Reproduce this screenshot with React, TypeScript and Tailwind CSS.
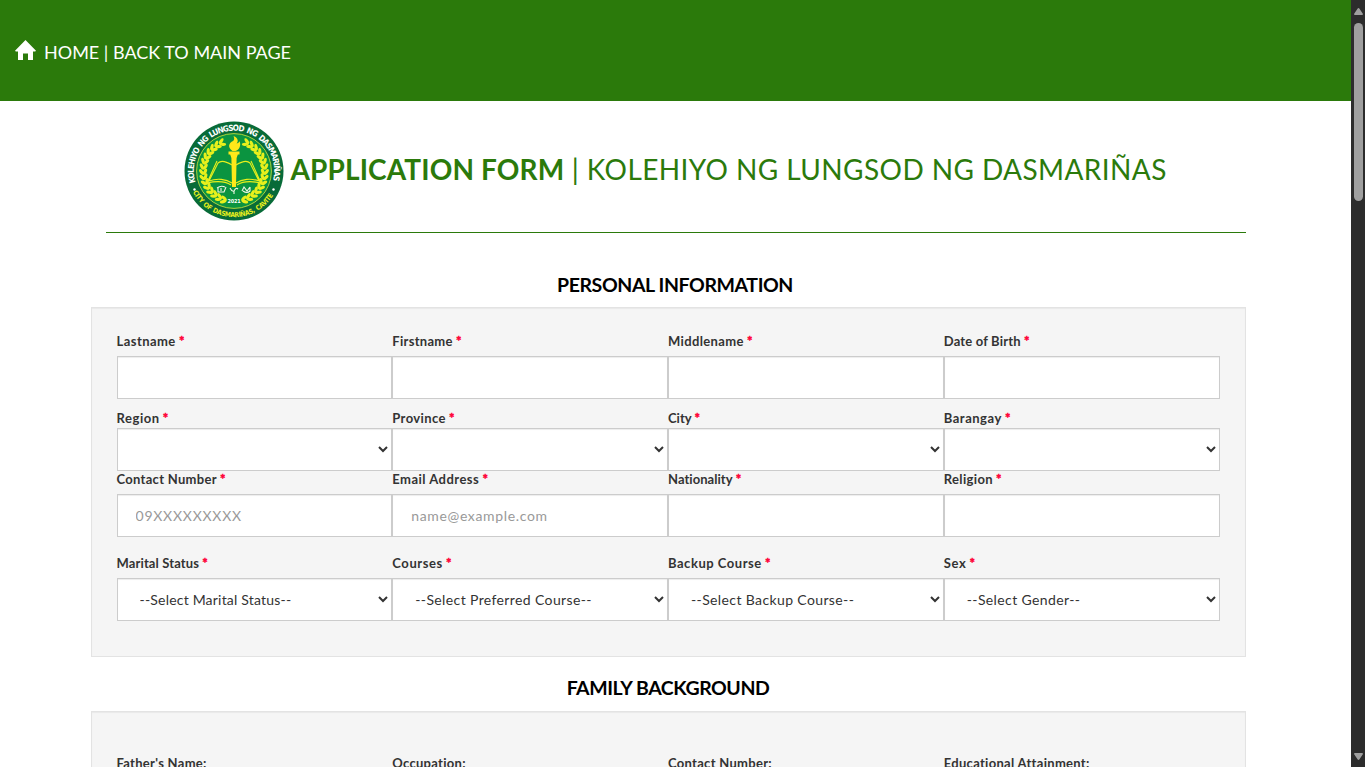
import React from "react";

type Field = {
  label: string;
  required?: boolean;
  kind: "input" | "select";
  text?: string;
  track?: string;
};

const rows: { pad: string; labelHeight: string; fields: Field[] }[] = [
  {
    pad: "pt-[24px]",
    labelHeight: "h-[24px]",
    fields: [
      { label: "Lastname", required: true, kind: "input", track: "tracking-[0.45px]" },
      { label: "Firstname", required: true, kind: "input" },
      { label: "Middlename", required: true, kind: "input", track: "tracking-[0.36px]" },
      { label: "Date of Birth", required: true, kind: "input", track: "tracking-[0.17px]" },
    ],
  },
  {
    pad: "pt-[10px]",
    labelHeight: "h-[19px]",
    fields: [
      { label: "Region", required: true, kind: "select", track: "tracking-[0.55px]" },
      { label: "Province", required: true, kind: "select", track: "tracking-[0.4px]" },
      { label: "City", required: true, kind: "select", track: "tracking-[0px]" },
      { label: "Barangay", required: true, kind: "select", track: "tracking-[0.52px]" },
    ],
  },
  {
    pad: "-mt-px",
    labelHeight: "h-[24px]",
    fields: [
      { label: "Contact Number", required: true, kind: "input", text: "09XXXXXXXXX" },
      { label: "Email Address", required: true, kind: "input", text: "name@example.com", track: "tracking-[0.48px]" },
      { label: "Nationality", required: true, kind: "input", track: "tracking-[0.05px]" },
      { label: "Religion", required: true, kind: "input", track: "tracking-[0.35px]" },
    ],
  },
  {
    pad: "pt-[17px]",
    labelHeight: "h-[24px]",
    fields: [
      { label: "Marital Status", required: true, kind: "select", text: "--Select Marital Status--", track: "tracking-[0.13px]" },
      { label: "Courses", required: true, kind: "select", text: "--Select Preferred Course--", track: "tracking-[0.6px]" },
      { label: "Backup Course", required: true, kind: "select", text: "--Select Backup Course--", track: "tracking-[0.53px]" },
      { label: "Sex", required: true, kind: "select", text: "--Select Gender--", track: "tracking-[0.6px]" },
    ],
  },
];

const controlClass =
  "block h-[43px] w-full border border-[#ccc] bg-white px-[18px] text-[14px] text-[#333] shadow-[inset_0_1px_1px_rgba(0,0,0,0.075)] outline-none placeholder:text-[#999]";

function FieldCell({ field, labelHeight }: { field: Field; labelHeight: string }) {
  return (
    <div>
      <label className={`block ${labelHeight} text-[13px] leading-[18px] font-bold whitespace-nowrap text-[#333] ${field.track ?? "tracking-[0.3px]"}`}>
        {field.label}
        {field.required && <span className="tracking-normal text-[#ff0036] [-webkit-text-stroke:0.5px_#ff0036]"> *</span>}
      </label>
      {field.kind === "input" ? (
        <input className={`${controlClass} ${field.text?.startsWith("09") ? "tracking-[0.76px]" : "tracking-[0.65px]"}`} placeholder={field.text} />
      ) : (
        <select className={`${controlClass} ${field.label === "Marital Status" ? "tracking-[0.2px]" : "tracking-[0.38px]"}`}>
          <option>{field.text}</option>
        </select>
      )}
    </div>
  );
}

function Laurel() {
  const leaves = [];
  for (let i = 0; i < 15; i++) {
    const a = 16 + i * 9.8;
    leaves.push(
      <g key={i}>
        <g transform={`rotate(${a} 50 50)`}>
          <ellipse cx="48" cy="78.9" rx="3.4" ry="1.6" transform="rotate(30 48 78.9)" />
          <ellipse cx="48" cy="82.4" rx="3.4" ry="1.6" transform="rotate(-30 48 82.4)" />
        </g>
        <g transform={`rotate(${-a} 50 50)`}>
          <ellipse cx="52" cy="78.9" rx="3.4" ry="1.6" transform="rotate(-30 52 78.9)" />
          <ellipse cx="52" cy="82.4" rx="3.4" ry="1.6" transform="rotate(30 52 82.4)" />
        </g>
      </g>
    );
  }
  return <g fill="#e8f01c">{leaves}</g>;
}

function Seal() {
  return (
    <svg className="size-[100px] shrink-0" viewBox="0 0 100 100">
      <defs>
        <path id="arcTop" d="M11.8 62.4 A40.2 40.2 0 1 1 88.2 62.4" />
        <path id="arcBottom" d="M6 64 A46.2 46.2 0 0 0 94 64" />
      </defs>
      <circle cx="50" cy="50" r="49.5" fill="#086b38" />
      <circle cx="50" cy="50" r="37.4" fill="#0b9440" stroke="#d6e83a" strokeWidth="0.8" />
      <Laurel />
      <g fontFamily="'Liberation Sans Narrow', 'DejaVu Sans Condensed', 'Liberation Sans', sans-serif" fontWeight="bold">
        <text fontSize="8.2" fill="#fff" wordSpacing="1.5" letterSpacing="0.55">
          <textPath href="#arcTop" textLength="148" lengthAdjust="spacing" startOffset="1">KOLEHIYO NG LUNGSOD NG DASMARIÑAS</textPath>
        </text>
        <text fontSize="6.8" fill="#e8f01c" wordSpacing="1" letterSpacing="0.4">
          <textPath href="#arcBottom" textLength="98" lengthAdjust="spacing" startOffset="7.5">CITY OF DASMARIÑAS, CAVITE</textPath>
        </text>
        <text x="50" y="81.5" fontSize="5.4" fill="#fff" textAnchor="middle" textLength="13">2021</text>
      </g>
      <circle cx="10.5" cy="68.5" r="1.2" fill="#fff" />
      <circle cx="89.5" cy="68.5" r="1.2" fill="#fff" />
      <path
        d="M48 44 C40 39 36 40 34 42 L25 60 C33 57 42 58 48 62 M52 44 C60 39 64 40 66 42 L75 60 C67 57 58 58 52 62 M33 40 L23 62 C32 60 41 60 47 64 M67 40 L77 62 C68 60 59 60 53 64"
        fill="none"
        stroke="#e8f01c"
        strokeWidth="1.1"
      />
      <path d="M46 33 H54 L52.6 37 L52 66 H48 L47.4 37 Z M44.5 30.5 H55.5 V33.5 H44.5 Z" fill="#ffe81a" />
      <path d="M48.5 30 C43 26 45 22 49 20 C51 18.5 50 16.5 49.5 15 C54.5 17 54.5 21 52.5 22.5 C55 22 55.5 20.5 55.5 20 C57.5 25 55 29 51.5 30 Z" fill="#ffe81a" />
      <path
        d="M33 67 q4 -3 8 -1 M34 67 v4 h6 l2 -5 M37 67 v3 M46 67 q2 4 4 3 q2 -4 4 -2 M50 70 v3 M58 70 l2 -4 l3 4 l3 -4 M59 70 q4 3 7 0 v-4"
        fill="none"
        stroke="#f1f6e5"
        strokeWidth="1.1"
      />
    </svg>
  );
}

function SectionTitle({ children, className }: { children: React.ReactNode; className: string }) {
  return <h2 className={`text-center text-[19.5px] leading-[24px] font-bold whitespace-nowrap text-black ${className}`}>{children}</h2>;
}

const panelClass = "border border-[#e3e3e3] bg-[#f5f5f5] px-[25px] shadow-[inset_0_1px_1px_rgba(0,0,0,0.05)]";

export default function App() {
  return (
    <div className="flex h-[767px] w-[1365px] overflow-hidden bg-white font-['Lato',sans-serif]">
      <div className="h-full w-[1351px] overflow-hidden">
        <header className="flex h-[101px] items-start bg-[#2b7a0b] pt-[39px] pl-[15px] text-white">
          <svg className="mt-px h-[21px] w-[21px]" viewBox="0 0 21 21" fill="currentColor">
            <path d="M10.5 0 L21 10.7 L20.2 11.4 H18 V20 H13 V13.5 H8 V20 H3 V11.4 H.8 L0 10.7 Z" />
          </svg>
          <a className="ml-[8px] text-[18px] leading-[27px] whitespace-nowrap">HOME | BACK TO MAIN PAGE</a>
        </header>

        <main className="ml-[90.5px] w-[1155px]">
          <div className="ml-[15px] flex h-[132px] items-start border-b border-[#2b7a0b] pt-[20px] pl-[78px] text-[#2b7a0b]">
            <Seal />
            <h1 className="mt-[30px] ml-[7px] flex text-[28px] leading-[36px] whitespace-pre">
              <span className="font-bold tracking-[0.12px]">APPLICATION FORM</span>
              <span className="tracking-[0.41px]"> | KOLEHIYO NG LUNGSOD NG DASMARIÑAS</span>
            </h1>
          </div>

          <SectionTitle className="mt-[40px] pl-[14px] tracking-[-0.4px]">PERSONAL INFORMATION</SectionTitle>
          <section className={`mt-[10px] h-[350px] ${panelClass}`}>
            {rows.map((row, i) => (
              <div key={i} className={`grid grid-cols-4 ${row.pad}`}>
                {row.fields.map((f) => (
                  <FieldCell key={f.label} field={f} labelHeight={row.labelHeight} />
                ))}
              </div>
            ))}
          </section>

          <SectionTitle className="mt-[19px] tracking-[-0.45px]">FAMILY BACKGROUND</SectionTitle>
          <section className={`mt-[11px] h-[350px] ${panelClass}`}>
            <div className="grid grid-cols-4 pt-[42px]">
              {["Father's Name:", "Occupation:", "Contact Number:", "Educational Attainment:"].map((label) => (
                <FieldCell key={label} field={{ label, kind: "input" }} labelHeight="h-[24px]" />
              ))}
            </div>
          </section>
        </main>
      </div>

      <aside className="flex w-[14px] flex-col items-center bg-[#2c2c2c]">
        <svg className="mt-[8px] h-[7px] w-[9px]" viewBox="0 0 9 7" fill="#9f9f9f">
          <path d="M4.5 0 Q5 0 5.5 .8 L9 6 Q9 7 8 7 H1 Q0 7 0 6 L3.5 .8 Q4 0 4.5 0Z" />
        </svg>
        <div className="mt-[8px] h-[178px] w-[9px] rounded-full bg-[#9f9f9f]" />
        <svg className="mt-auto mb-[7px] h-[7px] w-[9px]" viewBox="0 0 9 7" fill="#9f9f9f">
          <path d="M4.5 7 Q5 7 5.5 6.2 L9 1 Q9 0 8 0 H1 Q0 0 0 1 L3.5 6.2 Q4 7 4.5 7Z" />
        </svg>
      </aside>
    </div>
  );
}
